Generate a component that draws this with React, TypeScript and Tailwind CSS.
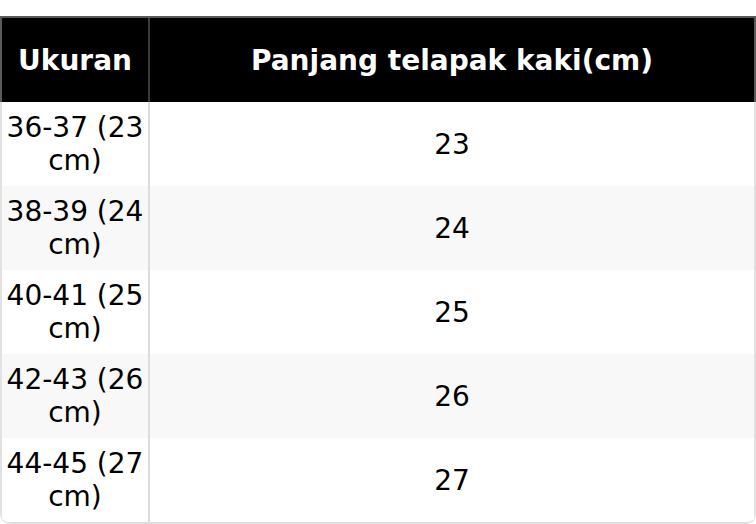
const rows = [
  { size: "36-37 (23 cm)", len: "23" },
  { size: "38-39 (24 cm)", len: "24" },
  { size: "40-41 (25 cm)", len: "25" },
  { size: "42-43 (26 cm)", len: "26" },
  { size: "44-45 (27 cm)", len: "27" },
];

export default function App() {
  return (
    <div className="bg-white pt-4 w-[756px] h-[524px] font-['DejaVu_Sans',sans-serif] text-[28px] leading-[33px] text-black">
      <div className="w-[756px] overflow-hidden rounded-b-[10px] border-t-2 border-b-2 border-t-[#5a5a5a] border-b-[#dedede]">
        <div className="flex h-[84px] border-x-2 border-[#5a5a5a] bg-black font-bold text-white">
          <div className="flex w-[148px] shrink-0 items-center justify-center border-r-2 border-[#3a3a3a]">
            Ukuran
          </div>
          <div className="flex flex-1 items-center justify-center">
            Panjang telapak kaki(cm)
          </div>
        </div>
        {rows.map((r, i) => (
          <div
            key={r.size}
            className={`flex h-[84px] border-x-2 border-[#e2e2e2] ${i % 2 === 1 ? "bg-[#f8f8f8]" : "bg-white"}`}
          >
            <div className="flex w-[148px] shrink-0 items-center justify-center border-r-2 border-[#dcdcdc] text-center">
              {r.size}
            </div>
            <div className="flex flex-1 items-center justify-center">{r.len}</div>
          </div>
        ))}
      </div>
    </div>
  );
}
